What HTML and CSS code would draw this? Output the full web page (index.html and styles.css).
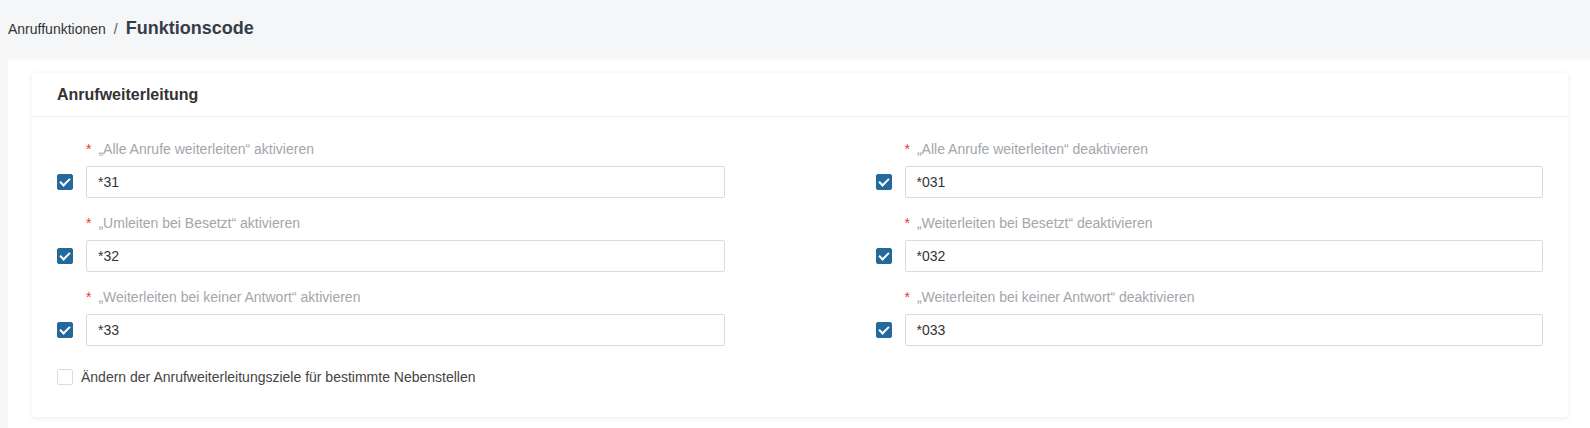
FILE: index.html
```html
<!DOCTYPE html>
<html lang="de">
<head>
    <meta charset="UTF-8">
    <meta name="viewport" content="width=device-width, initial-scale=1.0">
    <title>Funktionscode</title>
    <link rel="stylesheet" href="styles.css">
</head>
<body>
    <div class="page-header">
        <span class="crumb">Anruffunktionen</span>
        <span class="crumb-sep">/</span>
        <span class="crumb-current">Funktionscode</span>
    </div>

    <div class="content">
        <div class="card">
            <div class="card-header">Anrufweiterleitung</div>
            <div class="card-body">
                <div class="form-grid">
                    <div class="field">
                        <label><span class="req">*</span>„Alle Anrufe weiterleiten“ aktivieren</label>
                        <div class="field-row">
                            <span class="check checked"></span>
                            <input type="text" value="*31">
                        </div>
                    </div>
                    <div class="field">
                        <label><span class="req">*</span>„Alle Anrufe weiterleiten“ deaktivieren</label>
                        <div class="field-row">
                            <span class="check checked"></span>
                            <input type="text" value="*031">
                        </div>
                    </div>
                    <div class="field">
                        <label><span class="req">*</span>„Umleiten bei Besetzt“ aktivieren</label>
                        <div class="field-row">
                            <span class="check checked"></span>
                            <input type="text" value="*32">
                        </div>
                    </div>
                    <div class="field">
                        <label><span class="req">*</span>„Weiterleiten bei Besetzt“ deaktivieren</label>
                        <div class="field-row">
                            <span class="check checked"></span>
                            <input type="text" value="*032">
                        </div>
                    </div>
                    <div class="field">
                        <label><span class="req">*</span>„Weiterleiten bei keiner Antwort“ aktivieren</label>
                        <div class="field-row">
                            <span class="check checked"></span>
                            <input type="text" value="*33">
                        </div>
                    </div>
                    <div class="field">
                        <label><span class="req">*</span>„Weiterleiten bei keiner Antwort“ deaktivieren</label>
                        <div class="field-row">
                            <span class="check checked"></span>
                            <input type="text" value="*033">
                        </div>
                    </div>
                </div>

                <div class="option-row">
                    <span class="check"></span>
                    <span class="option-text">Ändern der Anrufweiterleitungsziele für bestimmte Nebenstellen</span>
                </div>
            </div>
        </div>
    </div>
</body>
</html>
```

FILE: styles.css
```css
body {
    font-family: 'Liberation Sans', Arial, sans-serif;
    margin: 0;
    background-color: #f5f6f8;
    color: #333;
    font-size: 14px;
}

.page-header {
    height: 57px;
    display: flex;
    align-items: center;
    padding: 0 8px;
    background-color: #f5f6f8;
}

.crumb {
    font-size: 14px;
    color: #333;
}

.crumb-sep {
    margin: 0 8px;
    color: #555;
}

.crumb-current {
    font-size: 18px;
    font-weight: bold;
    color: #353d4a;
}

.content {
    margin-left: 8px;
    min-height: 371px;
    box-sizing: border-box;
    background-color: white;
    padding: 16px 22px 20px 24px;
    box-shadow: inset 0 6px 5px -5px rgba(0,0,0,0.07);
}

.card {
    background-color: white;
    border-radius: 4px;
    box-shadow: 0 1px 6px rgba(0,0,0,0.08);
}

.card-header {
    height: 43px;
    display: flex;
    align-items: center;
    padding: 0 25px;
    font-size: 16px;
    font-weight: bold;
    color: #333;
    border-bottom: 1px solid #ebebeb;
}

.card-body {
    padding: 22px 25px 24px 25px;
}

.form-grid {
    display: grid;
    grid-template-columns: 1fr 1fr;
    column-gap: 151px;
}

.field {
    margin-bottom: 15px;
}

.field label {
    display: block;
    height: 20px;
    line-height: 20px;
    margin: 0 0 7px 29px;
    color: #a3a6ab;
}

.req {
    color: #e4393c;
    margin-right: 7px;
}

.field-row {
    display: flex;
    align-items: center;
    gap: 13px;
}

.check {
    width: 16px;
    height: 16px;
    flex: none;
    box-sizing: border-box;
    border: 1px solid #dcdcdc;
    border-radius: 2px;
    background-color: white;
    position: relative;
}

.check.checked {
    background-color: #23699b;
    border-color: #23699b;
}

.check.checked::after {
    content: '';
    position: absolute;
    left: 4px;
    top: 1px;
    width: 4px;
    height: 8px;
    border: solid white;
    border-width: 0 2px 2px 0;
    transform: rotate(45deg);
}

input[type="text"] {
    flex: 1;
    min-width: 0;
    height: 32px;
    padding: 0 11px;
    border: 1px solid #dcdcdc;
    border-radius: 2px;
    box-sizing: border-box;
    font-family: inherit;
    font-size: 14px;
    color: #333;
}

.option-row {
    display: flex;
    align-items: center;
    gap: 8px;
    height: 32px;
}

.option-text {
    color: #444;
}
```
